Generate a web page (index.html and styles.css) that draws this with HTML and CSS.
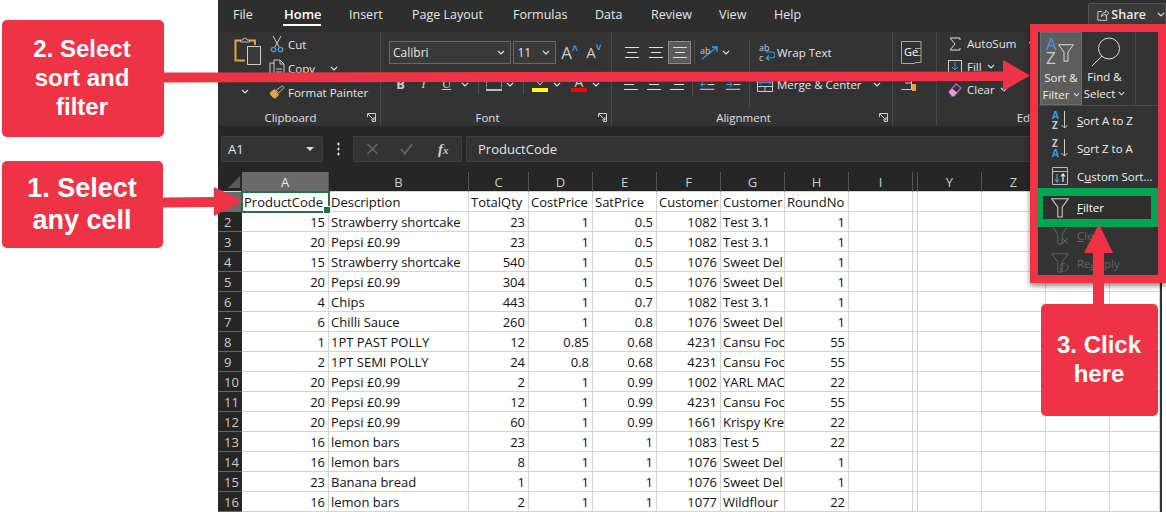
FILE: index.html
```html
<!DOCTYPE html>
<html lang="en">
<head>
<meta charset="utf-8">
<title>Excel sort and filter</title>
<link rel="stylesheet" href="styles.css">
</head>
<body>
<svg class="defs" aria-hidden="true">
  <symbol id="chev" viewBox="0 0 8 5"><path d="M1 1l3 3 3-3" fill="none" stroke="currentColor" stroke-width="1.2"/></symbol>
  <symbol id="lines-top" viewBox="0 0 14 14"><path d="M0 1.5h14M2 6.5h10M0 11.5h14" stroke="#ddd" fill="none"/></symbol>
  <symbol id="lines-left" viewBox="0 0 14 14"><path d="M0 1.5h14M0 6.5h10M0 11.5h14" stroke="#ddd" fill="none"/></symbol>
  <symbol id="lines-right" viewBox="0 0 14 14"><path d="M0 1.5h14M4 6.5h10M0 11.5h14" stroke="#ddd" fill="none"/></symbol>
  <symbol id="launcher" viewBox="0 0 9 9"><path d="M.5 4V.5h8v8H5M1 1l6 6M7 4v3H4" fill="none" stroke="#ccc"/></symbol>
  <symbol id="funnel" viewBox="0 0 18 20"><path d="M.8.8h16.4l-6 8.4v9.8H6.8V9.2z" fill="none" stroke="currentColor" stroke-width="1.1"/></symbol>
</svg>
<div class="stage">
  <div class="excel">
    <nav class="tabs">
      <span class="tab t-file">File</span>
      <span class="tab t-home">Home</span>
      <span class="tab t-insert">Insert</span>
      <span class="tab t-page">Page Layout</span>
      <span class="tab t-form">Formulas</span>
      <span class="tab t-data">Data</span>
      <span class="tab t-review">Review</span>
      <span class="tab t-view">View</span>
      <span class="tab t-help">Help</span>
      <span class="share">
        <svg class="share-ico" viewBox="0 0 14 14"><path d="M6 3H1v10h10V8M5 9c0-3 2-5 5-5V1.500L13.500 5 10 8.500V6.500C8 6.500 6 7 5 9z" fill="none" stroke="#ddd"/></svg>
        Share
        <svg class="chev c-share"><use href="#chev"/></svg>
      </span>
    </nav>
    <section class="ribbon">
      <div class="group g-clip">
        <div class="body">
          <div class="paste">
            <svg class="paste-ico" viewBox="0 0 28 28"><path d="M11 23.500H1.500V3.500h5M15 3.500h6V8" fill="none" stroke="#e9a23b" stroke-width="2"/><path d="M6.500 5V3h2.500a2 2 0 0 1 4 0h2.500v2z" fill="none" stroke="#bbb"/><rect x="13.500" y="9.500" width="13" height="18" fill="#3a3a3a" stroke="#ccc"/></svg>
            <svg class="chev c-paste"><use href="#chev"/></svg>
          </div>
          <div class="clip-list">
            <div class="clip-row"><svg class="clip-ico" viewBox="0 0 14 18"><path d="M3 1l6 11M11 1L5 12" stroke="#ccc" fill="none"/><circle cx="3.500" cy="14.500" r="2.200" fill="none" stroke="#4a9ede" stroke-width="1.300"/><circle cx="10.500" cy="14.500" r="2.200" fill="none" stroke="#4a9ede" stroke-width="1.300"/></svg>Cut</div>
            <div class="clip-row"><svg class="clip-ico" viewBox="0 0 16 18"><path d="M5 4H1v13h5M5 1h6l4 4v12H5zM11 1v4h4M7 10h6M7 13h6" fill="none" stroke="#ccc"/></svg>Copy<svg class="chev c-copy"><use href="#chev"/></svg></div>
            <div class="clip-row"><svg class="clip-ico" viewBox="0 0 18 16"><path d="M1 9l5-4 5 6-4 4c-2 0-5-3-6-6z" fill="#e9a23b" stroke="#e9c27a" stroke-width=".6"/><path d="M8 6l7-5 2 2-6 6z" fill="none" stroke="#ccc"/></svg>Format Painter</div>
          </div>
        </div>
        <div class="label"><span>Clipboard</span><svg class="launch"><use href="#launcher"/></svg></div>
      </div>

      <div class="group g-font">
        <div class="body body-col">
          <div class="font-top">
            <div class="select s-name">Calibri<svg class="chev"><use href="#chev"/></svg></div>
            <div class="select s-size">11<svg class="chev"><use href="#chev"/></svg></div>
            <span class="grow">A<sup class="car">&#x2C4;</sup></span>
            <span class="grow shrink">A<sup class="car">&#x2C5;</sup></span>
          </div>
          <div class="font-bottom">
            <b class="fb">B</b><i class="fb fi">I</i><u class="fb">U</u>
            <span class="cslot"><svg class="chev"><use href="#chev"/></svg></span>
            <span class="sep-slot"></span>
            <svg class="border-ico" viewBox="0 0 18 14"><path d="M1.500 1.500h15M1.500 1.500v10M16.500 1.500v10" fill="none" stroke="#aaa" stroke-dasharray="2 1"/><path d="M1 13h16" stroke="#eee" stroke-width="1.500"/></svg>
            <span class="cslot"><svg class="chev"><use href="#chev"/></svg></span>
            <span class="sep-slot"></span>
            <span class="colour"><svg class="fill-ico" viewBox="0 0 16 9"><path d="M3 0l5 6 5-6" fill="none" stroke="#ccc"/></svg><span class="bar yellow"></span></span>
            <span class="cslot"><svg class="chev"><use href="#chev"/></svg></span>
            <span class="colour col-a"><span class="col-letter">A</span><span class="bar red"></span></span>
            <span class="cslot"><svg class="chev"><use href="#chev"/></svg></span>
          </div>
        </div>
        <div class="label"><span>Font</span><svg class="launch"><use href="#launcher"/></svg></div>
      </div>

      <div class="group g-align">
        <div class="body">
          <div class="al-left">
            <div class="al-row">
              <span class="al-btn"><svg class="al-ico"><use href="#lines-top"/></svg></span>
              <span class="al-btn"><svg class="al-ico"><use href="#lines-top"/></svg></span>
              <span class="al-btn on"><svg class="al-ico"><use href="#lines-top"/></svg></span>
              <span class="vsep"></span>
              <svg class="orient" viewBox="0 0 20 18"><path d="M3 15L18 3M13 3h5v5" fill="none" stroke="#3b9fe5" stroke-width="1.300"/><text x="1" y="10" class="orient-t">ab</text></svg>
              <svg class="chev"><use href="#chev"/></svg>
            </div>
            <div class="al-row">
              <span class="al-btn"><svg class="al-ico"><use href="#lines-left"/></svg></span>
              <span class="al-btn"><svg class="al-ico"><use href="#lines-top"/></svg></span>
              <span class="al-btn"><svg class="al-ico"><use href="#lines-right"/></svg></span>
              <span class="vsep"></span>
              <svg class="indent" viewBox="0 0 16 14"><path d="M0 1.500h15M8 6.500h7M0 11.500h15" fill="none" stroke="#ddd"/><path d="M6 6.500H1M3 4L.8 6.500 3 9" fill="none" stroke="#3b9fe5"/></svg>
              <svg class="indent" viewBox="0 0 16 14"><path d="M0 1.500h15M8 6.500h7M0 11.500h15" fill="none" stroke="#ddd"/><path d="M0 6.500h6M4 4l2.200 2.500L4 9" fill="none" stroke="#3b9fe5"/></svg>
            </div>
          </div>
          <div class="al-right">
            <div class="al-wrap"><svg class="wrap-ico" viewBox="0 0 16 18"><text x="0" y="7" class="wrap-t">ab</text><text x="0" y="17" class="wrap-t">c</text><path d="M8 14h5a2.500 2.500 0 0 0 0-6H7M10 11.500L7.500 14l2.500 2.500" fill="none" stroke="#3b9fe5" stroke-width="1.200"/></svg>Wrap Text</div>
            <div class="al-merge"><svg class="merge-ico" viewBox="0 0 16 14"><path d="M.5 .5v13h15V.5M.5 8.500h15M8 8.500v5" fill="none" stroke="#ccc"/><path d="M2 4.500h12M4 2.500l-2 2 2 2M12 2.500l2 2-2 2" fill="none" stroke="#3b9fe5"/></svg>Merge &amp; Center<svg class="chev c-merge"><use href="#chev"/></svg></div>
          </div>
        </div>
        <div class="label"><span>Alignment</span><svg class="launch"><use href="#launcher"/></svg></div>
      </div>

      <div class="group g-cells">
        <div class="body body-col">
          <svg class="ge" viewBox="0 0 22 23"><path d="M14 .5H.5v22H14M14 .5h6v7h-6M14 7.500h6v7h-6M14 14.500h6v7h-6" fill="none" stroke="#aaa"/><text x="3" y="15" class="ge-t">Ge</text></svg>
          <svg class="creat" viewBox="0 0 22 14"><path d="M.5 .5h10v10H.5M4 4h7" fill="none" stroke="#ccc"/><rect x="11" y="5" width="4" height="7" fill="#e9a23b"/></svg>
        </div>
      </div>

      <div class="group g-edit">
        <div class="body body-col">
          <div class="ed-row"><svg class="ed-ico" viewBox="0 0 14 14"><path d="M12 3V1H2l5 6-5 6h10v-2" fill="none" stroke="#ddd"/></svg>AutoSum<svg class="chev c-sum"><use href="#chev"/></svg></div>
          <div class="ed-row"><svg class="ed-ico" viewBox="0 0 14 14"><rect x=".5" y=".5" width="13" height="13" fill="none" stroke="#ccc"/><path d="M7 2v8M4 7l3 3 3-3" fill="none" stroke="#3b9fe5"/></svg>Fill<svg class="chev"><use href="#chev"/></svg></div>
          <div class="ed-row"><svg class="ed-ico" viewBox="0 0 14 14"><path d="M1 9l7-8 5 4-7 8H4z" fill="none" stroke="#b160c4" stroke-width="1.300"/><path d="M1 9l3-3.500 5 4L6 13H4z" fill="#d9a3e2"/></svg>Clear<svg class="chev"><use href="#chev"/></svg></div>
        </div>
        <div class="label"><span>Editing</span></div>
      </div>
    </section>

    <section class="fbar">
      <div class="namebox">A1<span class="tri"></span></div>
      <span class="dots"></span>
      <div class="fbtns">
        <svg class="fx-ico" viewBox="0 0 12 12"><path d="M1 1l10 10M11 1L1 11" stroke="#666" stroke-width="1.500"/></svg>
        <svg class="fx-ico" viewBox="0 0 14 12"><path d="M1 6l4 5 8-10" fill="none" stroke="#666" stroke-width="2"/></svg>
        <i class="fx">f<span class="fx-x">x</span></i>
      </div>
      <div class="finput">ProductCode</div>
    </section>

    <table class="sheet">
      <colgroup>
        <col class="c-rh"><col class="c-a"><col class="c-b"><col class="c-c"><col class="c-std"><col class="c-std"><col class="c-std"><col class="c-std"><col class="c-std"><col class="c-std"><col class="c-gap"><col class="c-std"><col class="c-std"><col class="c-std"><col class="c-ab"><col class="c-edge"><col class="c-off">
      </colgroup>
      <thead>
        <tr>
          <th class="corner"><span class="corner-tri"></span></th><th class="on">A</th><th>B</th><th>C</th><th>D</th><th>E</th><th>F</th><th>G</th><th>H</th><th>I</th><th></th><th>Y</th><th>Z</th><th></th><th></th><th class="h-edge"></th><th class="h-off"></th>
        </tr>
      </thead>
      <tbody>
        <tr><th class="on">1</th><td class="sel">ProductCode</td><td>Description</td><td>TotalQty</td><td>CostPrice</td><td>SatPrice</td><td>Customer</td><td>Customer</td><td>RoundNo</td><td></td><td></td><td></td><td></td><td></td><td></td><td class="edge"></td><td class="off"></td></tr>
        <tr><th>2</th><td class="n">15</td><td>Strawberry shortcake</td><td class="n">23</td><td class="n">1</td><td class="n">0.5</td><td class="n">1082</td><td>Test 3.1</td><td class="n">1</td><td></td><td></td><td></td><td></td><td></td><td></td><td class="edge"></td><td class="off"></td></tr>
        <tr><th>3</th><td class="n">20</td><td>Pepsi £0.99</td><td class="n">23</td><td class="n">1</td><td class="n">0.5</td><td class="n">1082</td><td>Test 3.1</td><td class="n">1</td><td></td><td></td><td></td><td></td><td></td><td></td><td class="edge"></td><td class="off"></td></tr>
        <tr><th>4</th><td class="n">15</td><td>Strawberry shortcake</td><td class="n">540</td><td class="n">1</td><td class="n">0.5</td><td class="n">1076</td><td>Sweet Del</td><td class="n">1</td><td></td><td></td><td></td><td></td><td></td><td></td><td class="edge"></td><td class="off"></td></tr>
        <tr><th>5</th><td class="n">20</td><td>Pepsi £0.99</td><td class="n">304</td><td class="n">1</td><td class="n">0.5</td><td class="n">1076</td><td>Sweet Del</td><td class="n">1</td><td></td><td></td><td></td><td></td><td></td><td></td><td class="edge"></td><td class="off"></td></tr>
        <tr><th>6</th><td class="n">4</td><td>Chips</td><td class="n">443</td><td class="n">1</td><td class="n">0.7</td><td class="n">1082</td><td>Test 3.1</td><td class="n">1</td><td></td><td></td><td></td><td></td><td></td><td></td><td class="edge"></td><td class="off"></td></tr>
        <tr><th>7</th><td class="n">6</td><td>Chilli Sauce</td><td class="n">260</td><td class="n">1</td><td class="n">0.8</td><td class="n">1076</td><td>Sweet Del</td><td class="n">1</td><td></td><td></td><td></td><td></td><td></td><td></td><td class="edge"></td><td class="off"></td></tr>
        <tr><th>8</th><td class="n">1</td><td>1PT PAST POLLY</td><td class="n">12</td><td class="n">0.85</td><td class="n">0.68</td><td class="n">4231</td><td>Cansu Foc</td><td class="n">55</td><td></td><td></td><td></td><td></td><td></td><td></td><td class="edge"></td><td class="off"></td></tr>
        <tr><th>9</th><td class="n">2</td><td>1PT SEMI POLLY</td><td class="n">24</td><td class="n">0.8</td><td class="n">0.68</td><td class="n">4231</td><td>Cansu Foc</td><td class="n">55</td><td></td><td></td><td></td><td></td><td></td><td></td><td class="edge"></td><td class="off"></td></tr>
        <tr><th>10</th><td class="n">20</td><td>Pepsi £0.99</td><td class="n">2</td><td class="n">1</td><td class="n">0.99</td><td class="n">1002</td><td>YARL MAC</td><td class="n">22</td><td></td><td></td><td></td><td></td><td></td><td></td><td class="edge"></td><td class="off"></td></tr>
        <tr><th>11</th><td class="n">20</td><td>Pepsi £0.99</td><td class="n">12</td><td class="n">1</td><td class="n">0.99</td><td class="n">4231</td><td>Cansu Foc</td><td class="n">55</td><td></td><td></td><td></td><td></td><td></td><td></td><td class="edge"></td><td class="off"></td></tr>
        <tr><th>12</th><td class="n">20</td><td>Pepsi £0.99</td><td class="n">60</td><td class="n">1</td><td class="n">0.99</td><td class="n">1661</td><td>Krispy Kre</td><td class="n">22</td><td></td><td></td><td></td><td></td><td></td><td></td><td class="edge"></td><td class="off"></td></tr>
        <tr><th>13</th><td class="n">16</td><td>lemon bars</td><td class="n">23</td><td class="n">1</td><td class="n">1</td><td class="n">1083</td><td>Test 5</td><td class="n">22</td><td></td><td></td><td></td><td></td><td></td><td></td><td class="edge"></td><td class="off"></td></tr>
        <tr><th>14</th><td class="n">16</td><td>lemon bars</td><td class="n">8</td><td class="n">1</td><td class="n">1</td><td class="n">1076</td><td>Sweet Del</td><td class="n">1</td><td></td><td></td><td></td><td></td><td></td><td></td><td class="edge"></td><td class="off"></td></tr>
        <tr><th>15</th><td class="n">23</td><td>Banana bread</td><td class="n">1</td><td class="n">1</td><td class="n">1</td><td class="n">1076</td><td>Sweet Del</td><td class="n">1</td><td></td><td></td><td></td><td></td><td></td><td></td><td class="edge"></td><td class="off"></td></tr>
        <tr><th>16</th><td class="n">16</td><td>lemon bars</td><td class="n">2</td><td class="n">1</td><td class="n">1</td><td class="n">1077</td><td>Wildflour</td><td class="n">22</td><td></td><td></td><td></td><td></td><td></td><td></td><td class="edge"></td><td class="off"></td></tr>
      </tbody>
    </table>
  </div>

  <div class="panel">
    <div class="panel-top">
      <div class="big on">
        <svg class="big-ico" viewBox="0 0 36 30"><text x="3" y="12" class="az az-a">A</text><text x="3" y="26" class="az az-z">Z</text><use href="#funnel" x="14" y="6" width="18" height="18" class="funnel-big"/></svg>
        <span class="big-t">Sort &amp;</span>
        <span class="big-t">Filter<svg class="chev"><use href="#chev"/></svg></span>
      </div>
      <div class="big find">
        <svg class="big-ico" viewBox="0 0 36 30"><circle cx="22" cy="11.500" r="10.500" fill="none" stroke="#ddd"/><path d="M15 19L5 29" stroke="#ddd"/></svg>
        <span class="big-t">Find &amp;</span>
        <span class="big-t">Select<svg class="chev"><use href="#chev"/></svg></span>
      </div>
    </div>
    <ul class="menu">
      <li class="item"><svg class="m-ico" viewBox="0 0 18 20"><text x="1" y="9" class="mz mz-b">A</text><text x="1" y="19" class="mz">Z</text><path d="M13.500 1v17M10.500 15l3 3 3-3" fill="none" stroke="#ccc"/></svg><span><u>S</u>ort A to Z</span></li>
      <li class="item"><svg class="m-ico" viewBox="0 0 18 20"><text x="1" y="9" class="mz">Z</text><text x="1" y="19" class="mz mz-b">A</text><path d="M13.500 1v17M10.500 15l3 3 3-3" fill="none" stroke="#ccc"/></svg><span>S<u>o</u>rt Z to A</span></li>
      <li class="item"><svg class="m-ico" viewBox="0 0 18 20"><path d="M1.500 1.500h15v17h-15zM1.500 5.500h15" fill="none" stroke="#bbb"/><path d="M6 8v8M4 13.500L6 16l2-2.500" fill="none" stroke="#3b9fe5" stroke-width="1.200"/><path d="M12 16V8M10 10.500L12 8l2 2.500" fill="none" stroke="#eee" stroke-width="1.200"/></svg><span>C<u>u</u>stom Sort...</span></li>
      <li class="green"><div class="item item-filter"><svg class="m-ico m-funnel"><use href="#funnel"/></svg><span><u>F</u>ilter</span></div></li>
      <li class="item off-item"><svg class="m-ico m-funnel" viewBox="0 0 18 20"><path d="M.8.8h16.400l-6 8.400v9.800H6.800V9.200z" fill="none" stroke="currentColor"/><path d="M11 13l6 6M17 13l-6 6" stroke="currentColor"/></svg><span><u>C</u>lear</span></li>
      <li class="item off-item"><svg class="m-ico m-funnel" viewBox="0 0 18 20"><path d="M.8.8h16.400l-6 8.400v9.800H6.800V9.200z" fill="none" stroke="currentColor"/><circle cx="13" cy="14.500" r="4" fill="none" stroke="currentColor" stroke-dasharray="5 2"/></svg><span>Re<u>a</u>pply</span></li>
    </ul>
  </div>

  <svg class="arrows" viewBox="0 0 1166 512">
    <path d="M163 72.500L1003 71.500V60L1030 75.500 1003 91V81L163 82.500z"/>
    <path d="M163 197.500L214 197V187L243 201 214 216V207L163 207.500z"/>
    <path d="M1093 305V253H1084L1099 224 1113 253H1104V305z"/>
  </svg>

  <div class="callout c2">2. Select<br>sort and<br>filter</div>
  <div class="callout c1">1. Select<br>any cell</div>
  <div class="callout c3">3. Click<br>here</div>
</div>
</body>
</html>
```
FILE: styles.css
```css
* { box-sizing: border-box; }
html, body { margin: 0; padding: 0; background: #fff; }
body { font-family: "Open Sans", "Liberation Sans", sans-serif; }
.defs { position: absolute; width: 0; height: 0; }
.stage { position: relative; width: 1166px; height: 512px; overflow: hidden; }
.excel { margin-left: 218px; width: 948px; height: 512px; display: flex; flex-direction: column; overflow: hidden; background: #262626; }
.chev { width: 8px; height: 5px; color: #ddd; flex: none; display: block; }

/* tabs */
.tabs { height: 32px; flex: none; background: #2e2e2e; display: flex; align-items: flex-start; color: #e6e6e6; font-size: 12.5px; line-height: 29px; }
.tab { display: block; white-space: nowrap; }
.t-file { margin-left: 15px; width: 51px; }
.t-home { width: 65px; color: #fff; font-weight: 600; font-size: 13px; position: relative; }
.t-home::after { content: ""; position: absolute; left: -1px; top: 24px; width: 38px; height: 2px; background: #fff; }
.t-insert { width: 63px; }
.t-page { width: 101px; }
.t-form { width: 82px; }
.t-data { width: 56px; }
.t-review { width: 68px; }
.t-view { width: 55px; }
.t-help { width: 70px; }
.share { margin-left: 244px; margin-top: 3px; width: 78px; height: 30px; flex: none; background: #3a3a3a; border: 1px solid #555; border-radius: 2px; display: flex; align-items: flex-start; padding-left: 8px; gap: 2px; font-size: 12.5px; font-weight: 600; line-height: 21px; color: #e8e8e8; }
.share-ico { width: 14px; height: 14px; margin-top: 4px; }
.c-share { margin: 8px 0 0 9px; }

/* ribbon */
.ribbon { height: 94px; flex: none; background: #333; display: flex; color: #e6e6e6; font-size: 11.5px; }
.group { display: flex; flex-direction: column; flex: none; border-right: 1px solid #4a4a4a; height: 94px; }
.body { height: 76px; display: flex; }
.body-col { flex-direction: column; }
.label { height: 18px; padding-top: 1px; display: grid; grid-template-columns: 1fr 17px; align-items: center; justify-items: center; line-height: 16px; color: #e0e0e0; }
.launch { width: 9px; height: 9px; margin-top: -1px; }
.g-clip { width: 163px; }
.g-font { width: 231px; }
.g-align { width: 281px; }
.g-cells { width: 44px; }
.g-edit { width: 213px; border-right: 0; }

.paste { width: 50px; padding: 5px 0 0 16px; }
.paste-ico { width: 28px; height: 28px; display: block; }
.c-paste { margin: 24px 0 0 7px; }
.clip-list { display: flex; flex-direction: column; }
.clip-row { height: 24px; display: flex; align-items: center; white-space: nowrap; width: 113px; padding-left: 2px; }
.clip-ico { width: 16px; height: 18px; margin-right: 3px; flex: none; }
.c-copy { margin-left: 15px; }

.font-top { height: 31px; padding: 9px 0 0 8px; display: flex; align-items: flex-start; }
.select { height: 23px; border: 1px solid #6a6a6a; background: #3a3a3a; display: flex; align-items: center; justify-content: space-between; padding: 0 5px 0 3px; line-height: 20px; font-size: 12px; }
.s-name { width: 123px; }
.s-size { width: 43px; margin-left: 2px; }
.grow { width: 25px; font-size: 17px; line-height: 23px; margin-left: 5px; color: #ccc; white-space: nowrap; }
.shrink { font-size: 15px; margin-left: 0; }
.car { color: #3b9fe5; font-size: 10px; line-height: 0; vertical-align: 7px; font-weight: 700; }
.font-bottom { height: 32px; padding: 10px 0 0 8px; display: flex; align-items: center; }
.fb { width: 23px; text-align: center; font-size: 13px; color: #ccc; line-height: 20px; font-family: "Liberation Serif", serif; }
.fb:first-child { font-family: "Open Sans", sans-serif; }
.cslot { width: 14px; display: flex; justify-content: center; }
.sep-slot { width: 13px; height: 20px; display: flex; justify-content: center; }
.sep-slot::after { content: ""; width: 1px; background: #4f4f4f; }
.border-ico { width: 18px; height: 14px; }
.colour { width: 20px; height: 20px; display: flex; flex-direction: column; align-items: center; justify-content: flex-end; padding-bottom: 2px; }
.col-a { margin-left: 5px; }
.fill-ico { width: 16px; height: 9px; }
.col-letter { font-size: 14px; line-height: 12px; color: #ccc; }
.bar { width: 16px; height: 4px; flex: none; }
.yellow { background: #ffff00; }
.red { background: #ff0000; }

.al-left { width: 138px; padding: 2px 0 0 8px; display: flex; flex-direction: column; gap: 9px; border-right: 1px solid #4a4a4a; height: 68px; margin-top: 7px; }
.al-row { height: 23px; display: flex; align-items: center; }
.al-btn { width: 24px; height: 23px; display: flex; align-items: center; justify-content: center; }
.al-btn.on { background: #5a5a5a; border: 1px solid #8a8a8a; width: 23px; }
.al-ico { width: 14px; height: 14px; }
.vsep { width: 1px; height: 23px; background: #4f4f4f; margin: 0 4px 0 3px; }
.orient { width: 20px; height: 18px; margin-right: 3px; }
.orient-t { font-size: 9px; fill: #ccc; }
.indent { width: 16px; height: 14px; margin-right: 8px; margin-left: 3px; }
.al-right { padding-left: 7px; display: flex; flex-direction: column; margin-top: 9px; gap: 9px; }
.al-wrap, .al-merge { height: 23px; display: flex; align-items: center; white-space: nowrap; }
.wrap-ico { width: 16px; height: 18px; margin: 0 2px 0 2px; }
.wrap-t { font-size: 9px; fill: #ccc; }
.merge-ico { width: 16px; height: 14px; margin-right: 4px; }
.c-merge { margin-left: 11px; }
.ge { width: 22px; height: 23px; margin: 9px 0 0 8px; display: block; }
.ge-t { font-size: 11px; fill: #fff; }
.creat { width: 22px; height: 14px; margin: 15px 0 0 8px; display: block; }
.ed-row { height: 23px; display: flex; align-items: center; padding-left: 11px; gap: 5px; white-space: nowrap; }
.ed-ico { width: 14px; height: 14px; flex: none; }
.c-sum { margin-left: 7px; }

/* formula strip */
.fbar { height: 46px; flex: none; background: #262626; padding: 10px 0 10px 3px; display: flex; align-items: stretch; color: #ddd; font-size: 13px; }
.namebox { width: 102px; background: #333; border: 1px solid #3e3e3e; display: flex; align-items: center; justify-content: space-between; padding: 0 8px 0 6px; color: #e6e6e6; }
.tri { width: 0; height: 0; border-left: 4px solid transparent; border-right: 4px solid transparent; border-top: 4px solid #ddd; }
.dots { width: 30px; flex: none; background: radial-gradient(circle, #ddd 1px, transparent 1.300px) center / 3px 5px repeat-y; margin: 6px 0; }
.fbtns { width: 109px; background: #333; border: 1px solid #3e3e3e; display: flex; align-items: center; padding-left: 12px; gap: 21px; }
.fx-ico { width: 13px; height: 12px; flex: none; }
.fx { font-family: "Liberation Serif", serif; font-size: 15px; font-weight: 700; color: #ccc; margin-left: 4px; }
.fx-x { font-size: 11px; }
.finput { flex: 1; margin-left: 4px; background: #333; border: 1px solid #3e3e3e; padding-left: 11px; line-height: 24px; color: #e6e6e6; }

/* sheet */
.sheet { border-collapse: separate; border-spacing: 0; table-layout: fixed; width: 948px; background: #fff; font-family: "Open Sans", "Liberation Sans", sans-serif; font-size: 13px; color: #111; }
.c-rh { width: 24px; }
.c-a { width: 87px; }
.c-b { width: 140px; }
.c-c { width: 60px; }
.c-std { width: 64px; }
.c-gap { width: 5px; }
.c-ab { width: 50px; }
.c-edge { width: 2px; }
.c-off { width: 4px; }
.sheet thead th { height: 20px; padding: 0; background: #262626; color: #ccc; font-weight: 400; border-right: 1px solid #555; border-bottom: 1px solid #d4d4d4; line-height: 18px; overflow: hidden; }
.sheet thead th.on { background: #6a6a6a; color: #eee; }
.sheet thead .corner { position: relative; border-right: 0; }
.corner-tri { position: absolute; right: 2px; bottom: 3px; width: 0; height: 0; border-left: 12px solid transparent; border-bottom: 12px solid #5a5a5a; }
.sheet tbody th { height: 20px; padding: 2px 0 0 6px; background: #262626; color: #ccc; font-weight: 400; text-align: left; border-bottom: 1px solid #666; line-height: 17px; overflow: hidden; }
.sheet tbody th.on { background: #6a6a6a; }
.sheet td { height: 20px; padding: 2px 3px 0 2px; border-right: 1px solid #d4d4d4; border-bottom: 1px solid #d4d4d4; line-height: 17px; white-space: nowrap; overflow: hidden; }
.sheet td.n { text-align: right; }
.sheet td.sel { position: relative; overflow: visible; outline: 2px solid #217346; outline-offset: -1px; }
.sheet td.sel::after { content: ""; position: absolute; right: -3px; bottom: -3px; width: 6px; height: 6px; background: #217346; border: 1px solid #fff; }
.sheet td.edge { padding: 0; background: #333; border: 0; }
.sheet td.off { padding: 0; border: 0; }
.sheet thead .h-edge { background: #333; border: 0; }
.sheet thead .h-off { background: #fff; border: 0; }

/* sort & filter panel */
.panel { position: absolute; left: 1030px; top: 24px; width: 136px; height: 259px; border: 8px solid #ef3346; background: #333; box-shadow: 0 3px 5px rgba(0,0,0,.45); color: #eee; font-size: 11.5px; display: flex; flex-direction: column; }
.panel-top { height: 74px; flex: none; padding-left: 2px; display: flex; border-bottom: 1px solid #4a4a4a; }
.big { width: 42px; display: flex; flex-direction: column; align-items: center; line-height: 17px; }
.big.on { background: #5d5d5d; border: 1px solid #6e6e6e; }
.big.find { width: 54px; border-right: 1px solid #4a4a4a; padding-right: 8px; }
.big-ico { width: 36px; height: 30px; margin: 5px 0 1px; flex: none; }
.big-t { display: flex; align-items: center; gap: 3px; white-space: nowrap; }
.big-t .chev { width: 7px; }
.az { font-size: 17px; }
.az-a { fill: #3b9fe5; }
.az-z { fill: #ccc; }
.funnel-big { color: #ddd; }
.menu { list-style: none; margin: 0; padding: 0; flex: none; }
.item { height: 28px; flex: none; display: flex; align-items: center; padding-left: 13px; gap: 8px; white-space: nowrap; }
.m-ico { width: 18px; height: 20px; flex: none; }
.mz { font-size: 10px; font-weight: 700; fill: #ccc; }
.mz-b { fill: #3b9fe5; }
.green { height: 39px; margin: -2px 0 -6px; border: solid #00a651; border-width: 8px 7px 8px 5px; background: #2f2f2f; display: flex; align-items: center; }
.item-filter { padding-left: 8px; color: #fff; height: 23px; }
.m-funnel { color: #ccc; }
.off-item { color: #666; }
.off-item .m-funnel { color: #666; }

/* annotations */
.arrows { position: absolute; left: 0; top: 0; width: 1166px; height: 512px; fill: #ef3346; pointer-events: none; }
.callout { position: absolute; background: #ef3346; color: #fff; border-radius: 5px; font-family: "Liberation Sans", Arial, sans-serif; font-weight: 700; text-align: center; display: flex; align-items: center; justify-content: center; }
.c2 { left: 2px; top: 20px; width: 162px; height: 117px; font-size: 24px; line-height: 29px; padding: 0 2px 2px 0; }
.c1 { left: 2px; top: 161px; width: 161px; height: 87px; font-size: 27px; line-height: 32px; padding: 0 1px 2px 0; }
.c3 { left: 1041px; top: 304px; width: 117px; height: 112px; font-size: 24px; line-height: 29px; padding: 0 1px 2px 0; }
```
